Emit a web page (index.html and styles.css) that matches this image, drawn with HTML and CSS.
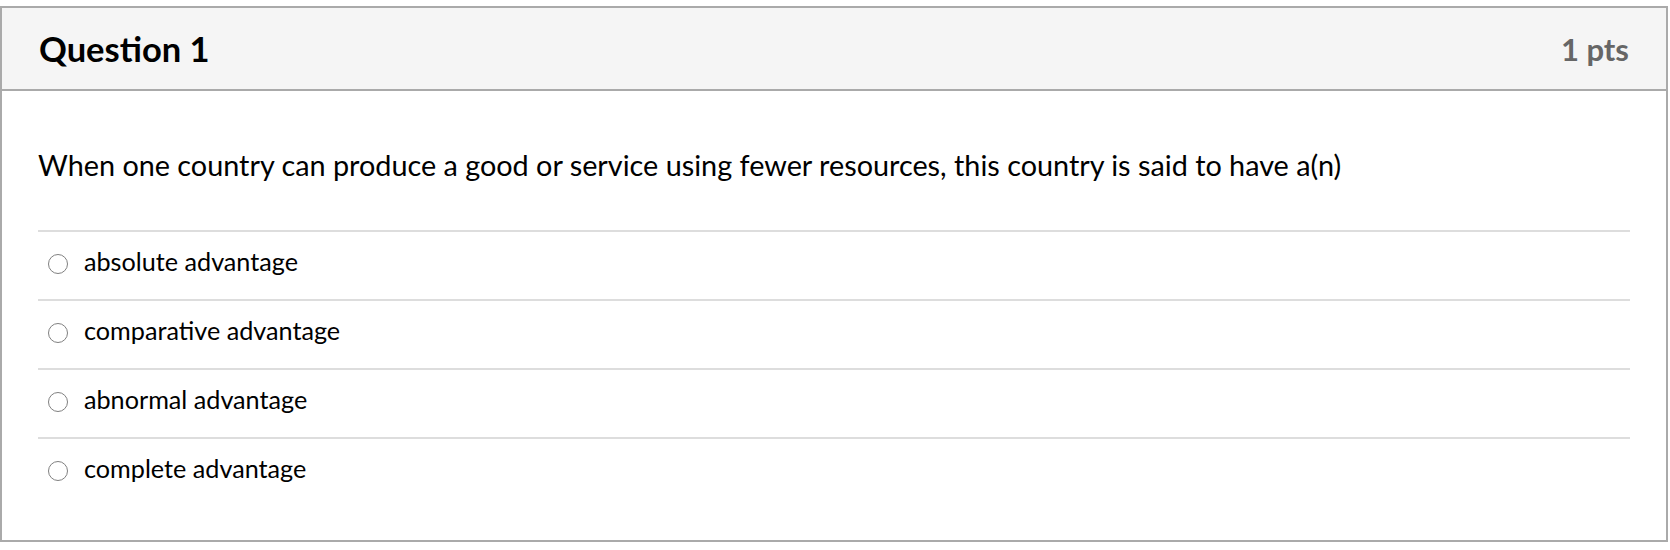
FILE: index.html
```html
<!DOCTYPE html>
<html>
<head>
<meta charset="utf-8">
<link rel="stylesheet" href="styles.css">
</head>
<body>
<div class="question">
  <div class="header">
    <span class="name">Question 1</span>
    <span class="pts">1 pts</span>
  </div>
  <div class="content">
    <div class="text">When one country can produce a good or service using fewer resources, this country is said to have a(n)</div>
    <div class="answers">
      <label class="answer"><span class="radio"></span><span class="label">absolute advantage</span></label>
      <label class="answer"><span class="radio"></span><span class="label">comparative advantage</span></label>
      <label class="answer"><span class="radio"></span><span class="label">abnormal advantage</span></label>
      <label class="answer"><span class="radio"></span><span class="label">complete advantage</span></label>
    </div>
  </div>
</div>
</body>
</html>
```

FILE: styles.css
```css
html, body {
  margin: 0;
  padding: 0;
  background: #fff;
}
body {
  padding-top: 6px;
  font-family: Lato, "Open Sans", sans-serif;
  color: #000;
}
.question {
  width: 1668px;
  height: 536px;
  box-sizing: border-box;
  border: 2px solid #aaa;
  display: flex;
  flex-direction: column;
}
.header {
  height: 81px;
  background: #f5f5f5;
  border-bottom: 2px solid #aaa;
  display: flex;
  align-items: center;
  justify-content: space-between;
  padding: 0 37px 0 37px;
}
.name {
  font-weight: 700;
  font-size: 34.5px;
}
.pts {
  font-weight: 700;
  font-size: 31px;
  color: #666;
}
.content {
  padding: 0 36px 0 36px;
}
.text {
  font-size: 28.8px;
  padding-top: 56px;
  padding-bottom: 47px;
  line-height: 36px;
}
.answer {
  display: flex;
  align-items: center;
  border-top: 2px solid #ddd;
  height: 57px;
  padding: 0 0 10px 10px;
  font-size: 25.2px;
}
.radio {
  width: 20px;
  height: 20px;
  border: 1.5px solid #808080;
  border-radius: 50%;
  margin-right: 16px;
  box-sizing: border-box;
  margin-top: 7px;
  flex: none;
}
```
